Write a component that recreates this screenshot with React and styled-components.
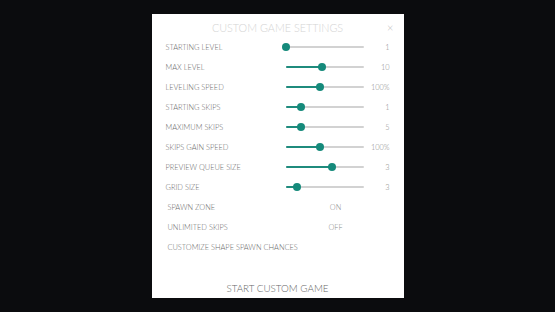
import React from "react"
import styled, { createGlobalStyle } from "styled-components"

const GlobalStyle = createGlobalStyle`
  html, body {
    margin: 0;
    padding: 0;
    background: #0b0c0e;
  }
  body {
    font-family: "Lato", "Liberation Sans", sans-serif;
  }
`

const Screen = styled.div`
  width: 555px;
  height: 312px;
  display: flex;
  align-items: center;
  justify-content: center;
  background: #0b0c0e;
`

const Panel = styled.div`
  position: relative;
  width: 252px;
  height: 284px;
  box-sizing: border-box;
  background: #ffffff;
  padding: 6px 14px 0 14px;
  display: flex;
  flex-direction: column;
`

const Title = styled.div`
  text-align: center;
  font-size: 10.8px;
  font-weight: 300;
  color: #d4d4d4;
  height: 16px;
  line-height: 16px;
  margin-bottom: 1px;
`

const Close = styled.div`
  position: absolute;
  top: 7px;
  right: 10px;
  font-size: 11px;
  color: #b8b8b8;
  font-weight: 300;
`

const Row = styled.div`
  display: grid;
  grid-template-columns: 120px 78px 1fr;
  align-items: center;
  height: 20px;
`

const Label = styled.div`
  font-size: 7.4px;
  font-weight: 300;
  color: #6c6c6c;
  padding-left: ${(p) => (p.$indent ? "2px" : "0")};
  white-space: nowrap;
`

const Value = styled.div`
  font-size: 7.4px;
  font-weight: 300;
  color: #8a8a8a;
  text-align: right;
`

const ToggleRow = styled.div`
  display: grid;
  grid-template-columns: 150px 40px;
  align-items: center;
  height: 20px;
`

const ToggleValue = styled.div`
  font-size: 7.4px;
  font-weight: 300;
  color: #8a8a8a;
  text-align: center;
`

const Track = styled.div`
  position: relative;
  height: 2px;
  background: #d2d2d2;
  border-radius: 1px;
`

const Fill = styled.div`
  height: 2px;
  background: #1f8b7d;
  border-radius: 1px;
`

const Thumb = styled.div`
  position: absolute;
  top: 50%;
  width: 8px;
  height: 8px;
  margin-left: -4px;
  margin-top: -4px;
  border-radius: 50%;
  background: #158a7b;
`

const Footer = styled.div`
  margin-top: auto;
  height: 20px;
  display: flex;
  align-items: center;
  justify-content: center;
  font-size: 9.8px;
  font-weight: 300;
  color: #666666;
`

const sliders = [
  { label: "STARTING LEVEL", pos: 0, value: "1" },
  { label: "MAX LEVEL", pos: 36, value: "10" },
  { label: "LEVELING SPEED", pos: 34, value: "100%" },
  { label: "STARTING SKIPS", pos: 15, value: "1" },
  { label: "MAXIMUM SKIPS", pos: 15, value: "5" },
  { label: "SKIPS GAIN SPEED", pos: 34, value: "100%" },
  { label: "PREVIEW QUEUE SIZE", pos: 46, value: "3" },
  { label: "GRID SIZE", pos: 11, value: "3" },
]

function Slider({ pos }) {
  return (
    <Track>
      <Fill style={{ width: pos + "px" }} />
      <Thumb style={{ left: pos + "px" }} />
    </Track>
  )
}

export default function App() {
  return (
    <Screen>
      <GlobalStyle />
      <Panel>
        <Title>CUSTOM GAME SETTINGS</Title>
        <Close>×</Close>
        {sliders.map((s) => (
          <Row key={s.label}>
            <Label>{s.label}</Label>
            <Slider pos={s.pos} />
            <Value>{s.value}</Value>
          </Row>
        ))}
        <ToggleRow>
          <Label $indent>SPAWN ZONE</Label>
          <ToggleValue>ON</ToggleValue>
        </ToggleRow>
        <ToggleRow>
          <Label $indent>UNLIMITED SKIPS</Label>
          <ToggleValue>OFF</ToggleValue>
        </ToggleRow>
        <ToggleRow>
          <Label $indent>CUSTOMIZE SHAPE SPAWN CHANCES</Label>
        </ToggleRow>
        <Footer>START CUSTOM GAME</Footer>
      </Panel>
    </Screen>
  )
}
